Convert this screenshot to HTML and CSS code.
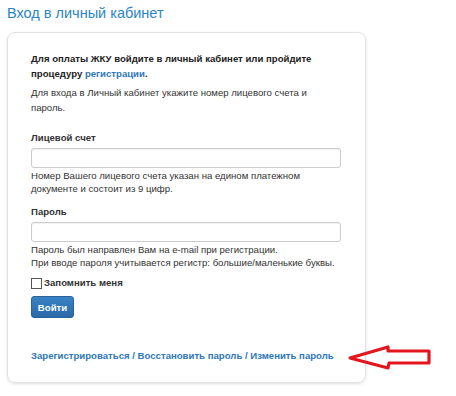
FILE: index.html
```html
<!DOCTYPE html>
<html>
<head>
<meta charset="utf-8">
<link rel="stylesheet" href="styles.css">
</head>
<body>
<h1 class="title">Вход в личный кабинет</h1>
<div class="stage">
  <div class="card">
    <p class="lead"><b>Для оплаты ЖКУ войдите в личный кабинет или пройдите процедуру <a href="#">регистрации</a>.</b></p>
    <p class="note">Для входа в Личный кабинет укажите номер лицевого счета и пароль.</p>
    <label class="label">Лицевой счет</label>
    <input class="field" type="text">
    <p class="help">Номер Вашего лицевого счета указан на едином платежном документе и состоит из 9 цифр.</p>
    <label class="label label-pw">Пароль</label>
    <input class="field" type="password">
    <p class="help">Пароль был направлен Вам на e-mail при регистрации.<br>При вводе пароля учитывается регистр: большие/маленькие буквы.</p>
    <label class="check"><span class="box"></span>Запомнить меня</label>
    <button class="btn">Войти</button>
    <div class="links"><a href="#">Зарегистрироваться</a> / <a href="#">Восстановить пароль</a> / <a href="#">Изменить пароль</a></div>
  </div>
  <svg class="arrow" width="90" height="30" viewBox="0 0 90 30">
    <polygon points="3,14 41,3 41,7 82,7 82,19 42,19 41,24" fill="none" stroke="#e3151f" stroke-width="3.2" stroke-linejoin="round"/>
  </svg>
</div>
</body>
</html>
```
FILE: styles.css
```css
html, body { margin: 0; padding: 0; background: #fff; }
body { font-family: "Liberation Sans", Arial, sans-serif; color: #333; width: 456px; height: 396px; overflow: hidden; }
.title { margin: 0; padding: 3px 0 0 7px; font-size: 14.5px; font-weight: normal; color: #2a85c6; line-height: 20px; height: 29px; }
.stage { position: relative; }
.card { margin-left: 7px; width: 334px; height: 331px; border: 1px solid #e2e2e2; border-radius: 8px; box-shadow: 0 1px 3px rgba(0,0,0,0.12); padding: 18px 0 0 23px; font-size: 9.6px; }
.card p { margin: 0; }
a { color: #2f77b8; text-decoration: none; }
.lead { line-height: 15px; color: #222; width: 300px; }
.note { line-height: 15px; margin-top: 4px !important; width: 295px; }
.label { display: block; font-weight: bold; margin-top: 16px; line-height: 14px; }
.label-pw { margin-top: 10px; }
.field { display: block; box-sizing: border-box; width: 310px; height: 20px; margin: 3px 0 0 0; border: 1px solid #ccc; border-radius: 3px; box-shadow: inset 0 1px 1px rgba(0,0,0,0.06); padding: 0; }
.help { line-height: 13px; margin-top: 1px !important; width: 318px; }
.check { display: flex; align-items: center; font-weight: bold; margin-top: 7px; line-height: 14px; }
.box { box-sizing: border-box; width: 11px; height: 11px; border: 1px solid #555; margin-right: 2px; background: #fff; }
.btn { display: block; margin-top: 6px; width: 43px; height: 22px; border: 1px solid #2a6399; border-radius: 3px; background: linear-gradient(#3a82c4, #2a69a8); color: #fff; font-family: "Liberation Sans", Arial, sans-serif; font-size: 9.6px; font-weight: bold; padding: 0; }
.links { margin-top: 31px; font-weight: bold; line-height: 14px; color: #2f77b8; }
.arrow { position: absolute; left: 347px; top: 312px; }
```
